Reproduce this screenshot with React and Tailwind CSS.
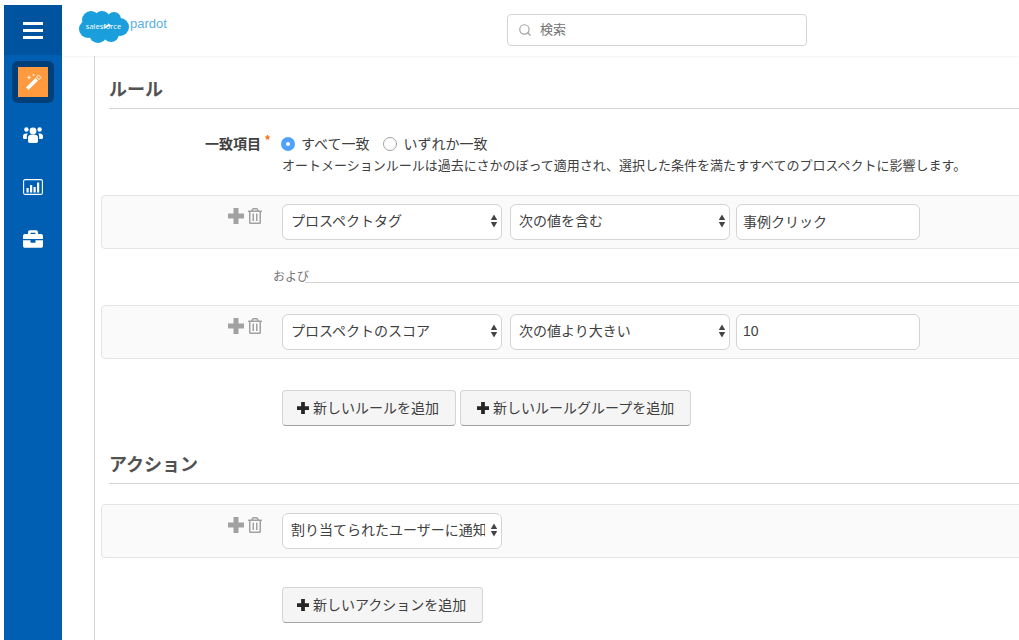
import React from 'react';
import { FaBriefcase, FaRegTrashAlt } from 'react-icons/fa';
import { Search } from 'lucide-react';

const fontClass = "font-['Liberation_Sans','Noto_Sans_CJK_JP',sans-serif]";

const CloudLogo = () => (
  <svg viewBox="0 0 52 36" className="w-13 h-9">
    <g fill="#1a9fdc">
      <circle cx="13" cy="11" r="9" />
      <circle cx="24" cy="10" r="8" />
      <circle cx="36" cy="10" r="7" />
      <circle cx="42" cy="18" r="9" />
      <circle cx="10" cy="20" r="9" />
      <circle cx="20" cy="25" r="9" />
      <circle cx="33" cy="25" r="8" />
    </g>
    <text x="25.5" y="20" textAnchor="middle" fill="#fff" fontSize="7.5" fontFamily="Open Sans, sans-serif">
      salesforce
    </text>
  </svg>
);

const WandIcon = () => (
  <svg viewBox="0 0 20 20" className="w-5 h-5" fill="#fff">
    <path d="M3 15.500 12.500 6l2.500 2.500L5.500 18z" />
    <path d="M13.500 5l2-2L18 5.500l-2 2z" fill="none" stroke="#fff" strokeWidth="1" />
    <path d="M6 3l.6 1.900L8.500 5.500l-1.900.6L6 8l-.6-1.900L3.500 5.500l1.900-.6z" />
    <path d="M10.500 1.500l.4 1.100 1.100.4-1.100.4-.4 1.100-.4-1.100L9 3l1.100-.4z" />
  </svg>
);

const UsersIcon = () => (
  <svg viewBox="0 0 20 19" className="w-5 h-5" fill="#fff">
    <circle cx="3.400" cy="4" r="2.200" />
    <circle cx="16.600" cy="4" r="2.200" />
    <circle cx="10" cy="5.400" r="3.400" />
    <path d="M0 11c0-2 1-3 3.400-3 .6 0 1 .1 1.400.3-.7.8-1 1.700-1 3v2.200H1.500C.6 13.500 0 12.900 0 12z" />
    <path d="M20 11c0-2-1-3-3.400-3-.6 0-1 .1-1.400.3.7.8 1 1.700 1 3v2.200h2.300c.9 0 1.500-.6 1.500-1.500z" />
    <path d="M5 12c0-2 1.500-3 5-3s5 1 5 3v3.500c0 1-.7 2-2 2H7c-1.300 0-2-1-2-2z" />
  </svg>
);

const ChartIcon = () => (
  <svg viewBox="0 0 20 16" className="w-5 h-4">
    <rect x="0.600" y="0.600" width="18.800" height="14.800" rx="1.500" fill="none" stroke="#fff" strokeWidth="1.100" />
    <g fill="#fff">
      <rect x="3.500" y="9" width="2.200" height="4.500" />
      <rect x="7" y="6" width="2.200" height="7.500" />
      <rect x="10.500" y="8" width="2.200" height="5.500" />
      <rect x="14" y="3.500" width="2.200" height="10" />
    </g>
  </svg>
);

const PlusIcon = ({ className }) => (
  <svg viewBox="0 0 16 16" className={className} fill="currentColor">
    <path d="M5.500 0h5v5.500H16v5h-5.500V16h-5v-5.500H0v-5h5.500z" />
  </svg>
);

const SelectArrows = () => (
  <svg viewBox="0 0 7 13" className="w-2 h-3.5 absolute right-1 top-2.5 pointer-events-none" fill="#444">
    <path d="M3.500 0.500 6.500 5.500H.5z" />
    <path d="M3.500 12.500.5 7.500h6z" />
  </svg>
);

const Select = ({ value, className }) => (
  <div className={`relative ${className}`}>
    <select
      defaultValue={value}
      className="appearance-none w-full h-9 pl-2 pr-4 pb-0.5 bg-white border border-neutral-300 rounded-md text-sm text-neutral-700"
    >
      <option>{value}</option>
    </select>
    <SelectArrows />
  </div>
);

const FormRow = ({ left, children, className = '' }) => (
  <div className={`flex gap-5 border ${className}`}>
    <div className="w-40 flex justify-end shrink-0">{left}</div>
    {children}
  </div>
);

const RuleRow = ({ children, className = '' }) => (
  <FormRow
    className={`bg-neutral-50 border-neutral-200 rounded-l py-2 -mr-2 ${className}`}
    left={
      <div className="flex items-center gap-1 h-6 text-neutral-400">
        <PlusIcon className="w-4 h-4" />
        <FaRegTrashAlt className="w-3.5 h-4" />
      </div>
    }
  >
    {children}
  </FormRow>
);

const AddButton = ({ children, className = 'pl-3.5' }) => (
  <button className={`flex items-center gap-1 h-9 pr-4 bg-neutral-100 border border-neutral-300 border-b-neutral-400 rounded text-sm text-neutral-700 ${className}`}>
    <PlusIcon className="w-3 h-3 text-neutral-800" />
    {children}
  </button>
);

const SectionHeading = ({ children, className = '' }) => (
  <h2 className={`ml-2 pb-1 border-b border-neutral-300 text-lg font-bold text-neutral-600 ${className}`}>{children}</h2>
);

const Field = ({ value }) => (
  <input
    defaultValue={value}
    className="w-46 h-9 px-1.5 pb-0.5 bg-white border border-neutral-300 rounded-md text-sm text-neutral-700"
  />
);

const App = () => {
  return (
    <div className={`flex h-screen overflow-hidden bg-white ${fontClass}`}>
      <aside className="ml-1 mt-1.25 w-[58px] shrink-0 bg-[#005fb2] flex flex-col items-center">
        <div className="w-full h-12.5 bg-[#00549f] flex flex-col items-center justify-center gap-1">
          <span className="w-5 h-0.75 bg-white" />
          <span className="w-5 h-0.75 bg-white" />
          <span className="w-5 h-0.75 bg-white" />
        </div>
        <div className="mt-1.5 p-1.5 bg-[#003f78] rounded-md">
          <div className="w-7.5 h-7.5 bg-[#ff9a3e] flex items-center justify-center">
            <WandIcon />
          </div>
        </div>
        <div className="mt-5.5 flex flex-col items-center gap-8.5 text-white">
          <UsersIcon />
          <ChartIcon />
          <FaBriefcase className="w-5 h-5" />
        </div>
      </aside>

      <div className="flex-1 min-w-0 flex flex-col">
        <header className="h-14 pt-1 shrink-0 flex items-center bg-white shadow-xs">
          <div className="ml-4 -mt-1.5 flex items-center">
            <CloudLogo />
            <span className="-mt-1.5 text-[13px] text-[#5ab0e0]">pardot</span>
          </div>
          <div className="ml-85 w-75 h-8 flex items-center gap-2 px-2.5 border border-neutral-300 rounded">
            <Search className="w-3.5 h-3.5 text-neutral-400" />
            <span className="text-[13px] text-neutral-500">検索</span>
          </div>
        </header>

        <main className="flex-1 min-h-0 ml-8 pl-1.5 border-l border-neutral-300 overflow-hidden">
          <SectionHeading className="mt-5">ルール</SectionHeading>

          <FormRow
            className="mt-6 border-transparent"
            left={
              <span className="relative pr-px text-sm font-bold text-neutral-700">
                一致項目
                <span className="absolute -right-2 -top-0.5 text-xs text-orange-500">*</span>
              </span>
            }
          >
            <div>
              <div className="flex items-center gap-1.5 text-sm text-neutral-700">
                <span className="-ml-px w-3.5 h-3.5 rounded-full bg-blue-400 flex items-center justify-center">
                  <span className="w-1 h-1 rounded-full bg-white" />
                </span>
                <span>すべて一致</span>
                <span className="ml-2 w-3.5 h-3.5 rounded-full border border-neutral-400" />
                <span>いずれか一致</span>
              </div>
              <p className="mt-0.5 text-[13px] text-neutral-700 whitespace-nowrap">
                オートメーションルールは過去にさかのぼって適用され、選択した条件を満たすすべてのプロスペクトに影響します。
              </p>
            </div>
          </FormRow>

          <RuleRow className="mt-4.5">
            <Select value="プロスペクトタグ" className="w-55" />
            <Select value="次の値を含む" className="-ml-3 w-55" />
            <div className="-ml-3.5">
              <Field value="事例クリック" />
            </div>
          </RuleRow>

          <div className="mt-5 ml-43 flex items-end h-4">
            <span className="text-xs text-neutral-500">および</span>
            <span className="flex-1 -ml-1 mb-0.5 border-b border-neutral-300" />
          </div>

          <RuleRow className="mt-5">
            <Select value="プロスペクトのスコア" className="w-55" />
            <Select value="次の値より大きい" className="-ml-3 w-55" />
            <div className="-ml-3.5">
              <Field value="10" />
            </div>
          </RuleRow>

          <FormRow className="mt-7.5 border-transparent">
            <div className="flex gap-1">
              <AddButton>新しいルールを追加</AddButton>
              <AddButton className="pl-4">新しいルールグループを追加</AddButton>
            </div>
          </FormRow>

          <SectionHeading className="mt-6">アクション</SectionHeading>

          <RuleRow className="mt-5">
            <Select value="割り当てられたユーザーに通知" className="w-55" />
          </RuleRow>

          <FormRow className="mt-7 border-transparent">
            <div>
              <AddButton>新しいアクションを追加</AddButton>
            </div>
          </FormRow>
        </main>
      </div>
    </div>
  );
};

export default App;
